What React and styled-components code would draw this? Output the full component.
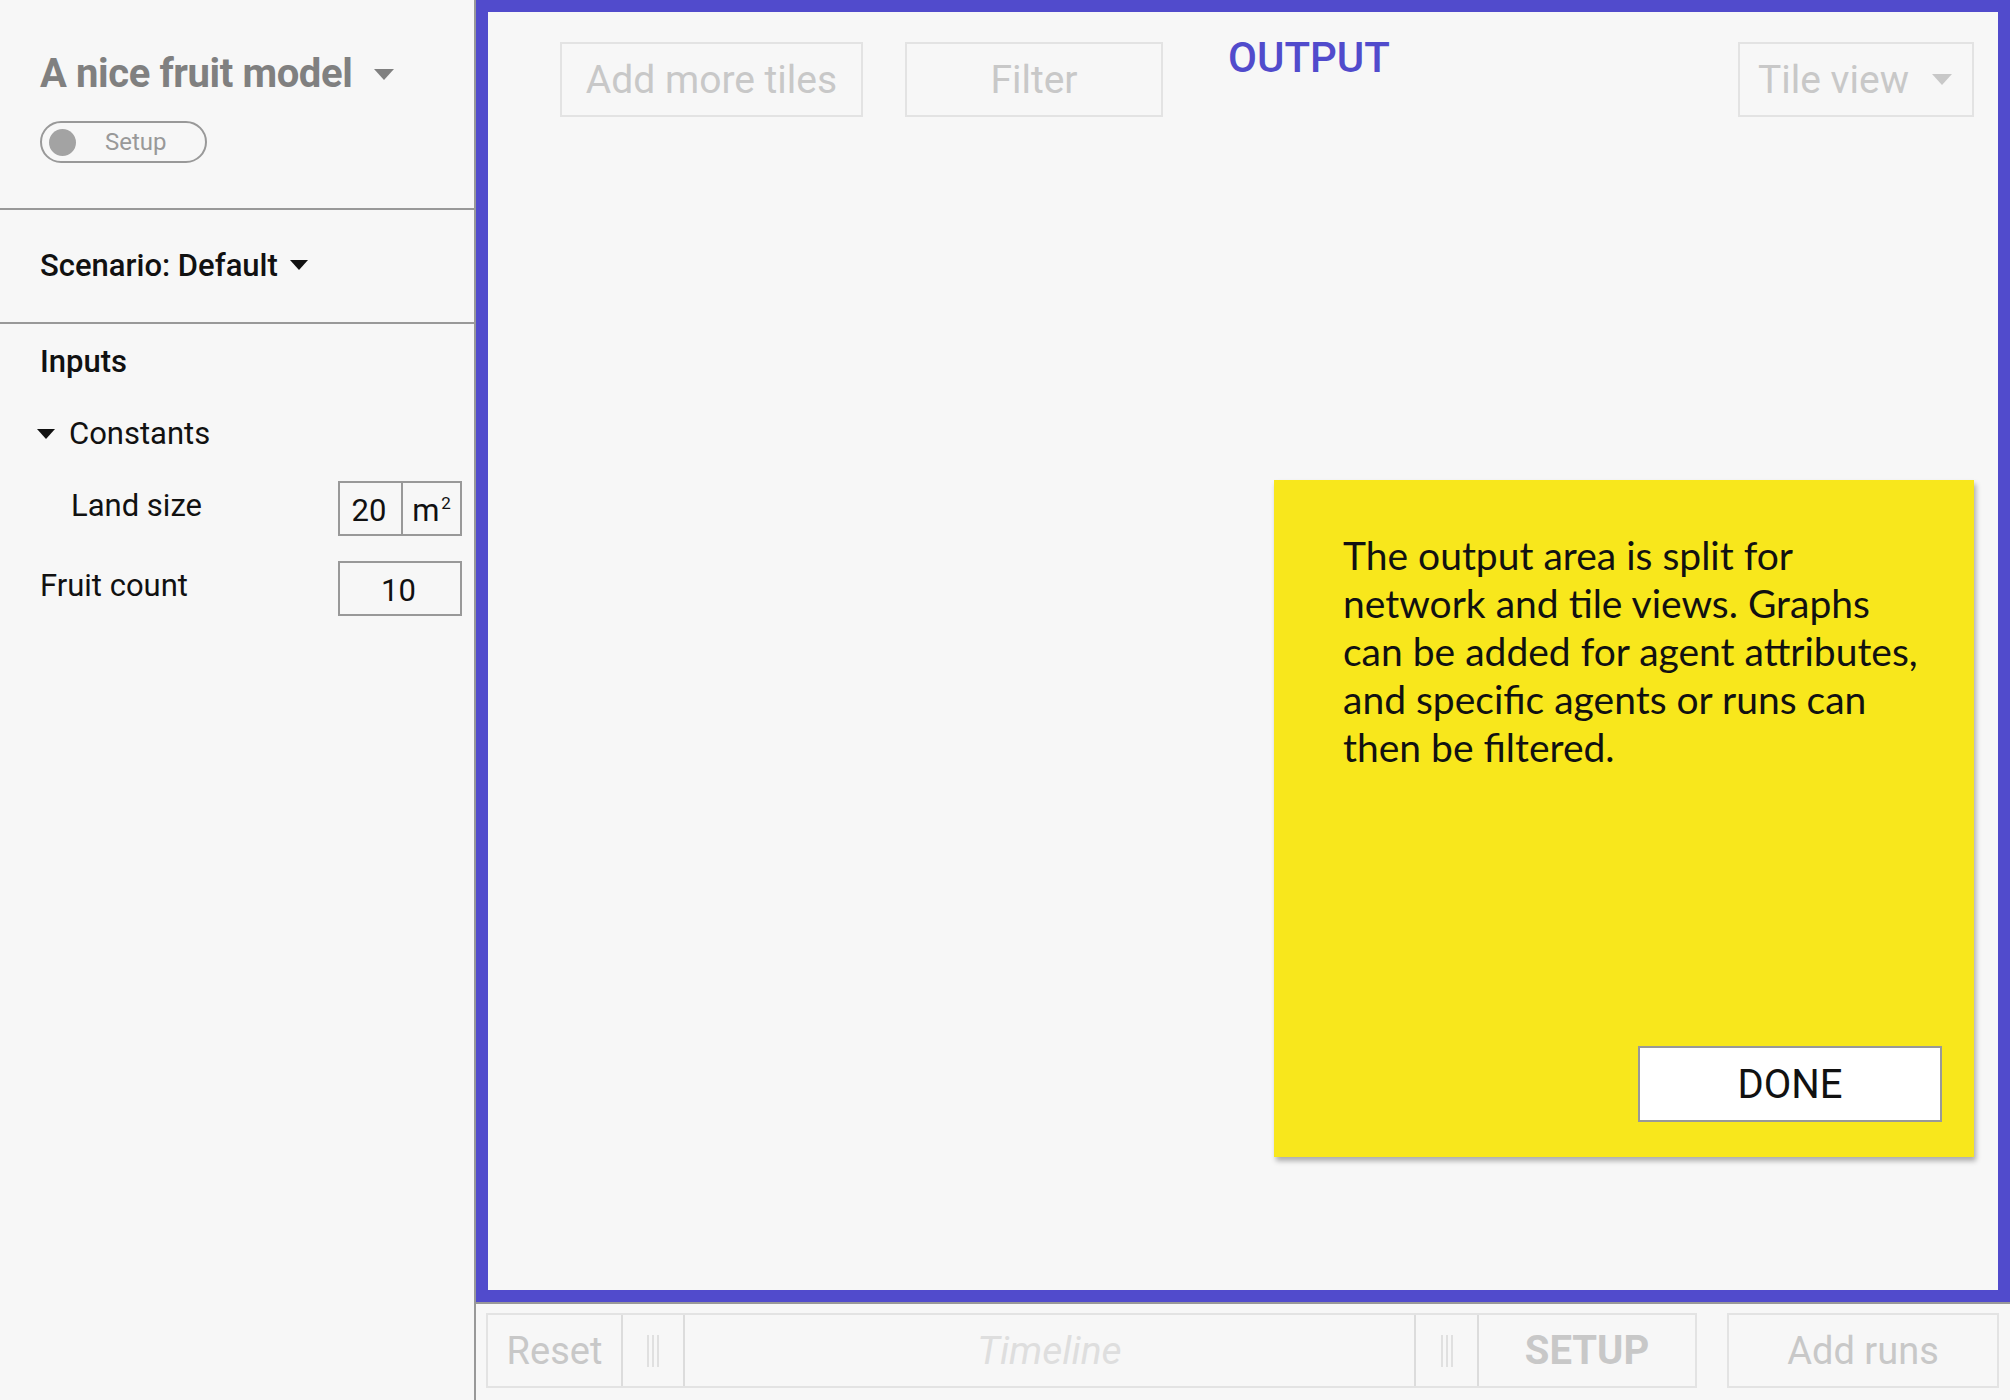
import React from "react";
import styled, { createGlobalStyle } from "styled-components";

const GlobalStyle = createGlobalStyle`
  html, body {
    margin: 0;
    padding: 0;
    background: #f7f7f7;
  }
  body {
    font-family: Roboto, "Liberation Sans", sans-serif;
    color: #111;
  }
  * {
    box-sizing: border-box;
  }
`;

const PURPLE = "#514bcc";

const App = () => {
  return (
    <Page>
      <GlobalStyle />
      <Sidebar>
        <ModelHeader>
          <ModelTitle>
            A nice fruit model
            <Caret size={10} color="#808080" />
          </ModelTitle>
          <Toggle>
            <Knob />
            <ToggleLabel>Setup</ToggleLabel>
          </Toggle>
        </ModelHeader>

        <ScenarioRow>
          Scenario: Default
          <Caret size={9} color="#111" />
        </ScenarioRow>

        <InputsSection>
          <SectionTitle>Inputs</SectionTitle>
          <GroupToggle>
            <Caret size={9} color="#111" />
            Constants
          </GroupToggle>
          <ParamList>
            <ParamRow $indent>
              Land size
              <ValueBox>
                <ValueCell $w={61}>20</ValueCell>
                <ValueCell $w={59} $divider>
                  m<Sup>2</Sup>
                </ValueCell>
              </ValueBox>
            </ParamRow>
            <ParamRow>
              Fruit count
              <ValueBox>
                <ValueCell $w={120}>10</ValueCell>
              </ValueBox>
            </ParamRow>
          </ParamList>
        </InputsSection>
      </Sidebar>

      <Main>
        <OutputFrame>
          <Toolbar>
            <GhostButton $w={303}>Add more tiles</GhostButton>
            <GhostButton $w={258}>Filter</GhostButton>
            <OutputTitle>OUTPUT</OutputTitle>
            <ViewSelect>
              Tile view
              <Caret size={10} color="#c8c8c8" />
            </ViewSelect>
          </Toolbar>

          <Coachmark>
            <CoachText>
              The output area is split for
              <br />
              network and tile views. Graphs
              <br />
              can be added for agent attributes,
              <br />
              and specific agents or runs can
              <br />
              then be filtered.
            </CoachText>
            <DoneButton>DONE</DoneButton>
          </Coachmark>
        </OutputFrame>

        <BottomBar>
          <Transport>
            <TransportCell $w={133} $first>
              Reset
            </TransportCell>
            <HandleCell $w={62}>
              <Grip />
            </HandleCell>
            <TimelineCell>Timeline</TimelineCell>
            <HandleCell $w={63}>
              <Grip />
            </HandleCell>
            <TransportCell $w={218} $bold>
              SETUP
            </TransportCell>
          </Transport>
          <GhostButton $w={272} $h={75} $size={38}>
            Add runs
          </GhostButton>
        </BottomBar>
      </Main>
    </Page>
  );
};

export default App;

const Page = styled.div`
  display: flex;
  width: 2010px;
  height: 1400px;
  overflow: hidden;
  background: #f7f7f7;
`;

/* ---------- sidebar ---------- */

const Sidebar = styled.aside`
  flex: 0 0 476px;
  border-right: 2px solid #999;
  display: flex;
  flex-direction: column;
`;

const ModelHeader = styled.div`
  height: 210px;
  padding: 54px 0 0 40px;
  border-bottom: 2px solid #999;
`;

const ModelTitle = styled.div`
  display: flex;
  align-items: center;
  gap: 22px;
  font-size: 40px;
  line-height: 40px;
  font-weight: 700;
  color: #808080;
  letter-spacing: -0.4px;
`;

const Caret = styled.span`
  display: inline-block;
  width: 0;
  height: 0;
  border-left: ${(p) => p.size}px solid transparent;
  border-right: ${(p) => p.size}px solid transparent;
  border-top: ${(p) => Math.round(p.size * 1.1)}px solid ${(p) => p.color};
`;

const Toggle = styled.div`
  margin-top: 27px;
  width: 167px;
  height: 42px;
  border: 2px solid #999;
  border-radius: 21px;
  display: flex;
  align-items: center;
  padding-left: 7px;
`;

const Knob = styled.span`
  width: 27px;
  height: 27px;
  border-radius: 50%;
  background: #a3a3a3;
`;

const ToggleLabel = styled.span`
  margin-left: 29px;
  font-size: 24px;
  color: #999;
`;

const ScenarioRow = styled.div`
  height: 114px;
  padding: 0 0 2px 40px;
  border-bottom: 2px solid #999;
  display: flex;
  align-items: center;
  gap: 12px;
  font-size: 31px;
  font-weight: 500;
`;

const InputsSection = styled.div`
  padding: 22px 12px 0 0;
`;

const SectionTitle = styled.div`
  padding-left: 40px;
  font-size: 31px;
  line-height: 31px;
  font-weight: 500;
`;

const GroupToggle = styled.div`
  margin-top: 41px;
  padding-left: 37px;
  display: flex;
  align-items: center;
  gap: 14px;
  font-size: 31px;
  line-height: 31px;
`;

const ParamList = styled.div`
  margin-top: 32px;
  display: flex;
  flex-direction: column;
  gap: 25px;
`;

const ParamRow = styled.div`
  height: 55px;
  display: flex;
  align-items: center;
  justify-content: space-between;
  padding-left: ${(p) => (p.$indent ? 71 : 40)}px;
  padding-bottom: 6px;
  font-size: 31px;
`;

const ValueBox = styled.div`
  display: flex;
  height: 55px;
  margin-bottom: -6px;
  border: 2px solid #999;
`;

const ValueCell = styled.div`
  width: ${(p) => p.$w}px;
  display: flex;
  align-items: center;
  justify-content: center;
  padding-top: 4px;
  padding-right: ${(p) => (p.$divider ? 0 : 3)}px;
  font-size: 31px;
  border-left: ${(p) => (p.$divider ? "2px solid #999" : "none")};
`;

const Sup = styled.sup`
  font-size: 17px;
  align-self: flex-start;
  margin-top: 6px;
  margin-left: 2px;
`;

/* ---------- output ---------- */

const Main = styled.main`
  flex: 1;
  display: flex;
  flex-direction: column;
`;

const OutputFrame = styled.section`
  position: relative;
  height: 1302px;
  border: 12px solid ${PURPLE};
`;

const Toolbar = styled.div`
  display: flex;
  align-items: flex-start;
  gap: 42px;
  padding: 30px 24px 0 72px;
`;

const GhostButton = styled.div`
  width: ${(p) => p.$w}px;
  height: ${(p) => p.$h || 75}px;
  flex: 0 0 auto;
  display: flex;
  align-items: center;
  justify-content: center;
  border: 2px solid #e3e3e3;
  font-size: ${(p) => p.$size || 39}px;
  color: #c8c8c8;
`;

const OutputTitle = styled.div`
  margin-left: 23px;
  margin-top: -5px;
  font-size: 42px;
  line-height: 42px;
  font-weight: 500;
  color: ${PURPLE};
`;

const ViewSelect = styled.div`
  margin-left: auto;
  width: 236px;
  height: 75px;
  display: flex;
  align-items: center;
  justify-content: space-between;
  padding: 0 20px 0 18px;
  border: 2px solid #e3e3e3;
  font-size: 39px;
  color: #c8c8c8;
`;

const Coachmark = styled.div`
  position: absolute;
  top: 468px;
  right: 24px;
  width: 700px;
  height: 677px;
  display: flex;
  flex-direction: column;
  padding: 51px 32px 35px 69px;
  background: #f8e71c;
  box-shadow: 2px 4px 5px rgba(0, 0, 0, 0.3);
`;

const CoachText = styled.p`
  margin: 0;
  font-family: Lato, "Open Sans", sans-serif;
  font-size: 39px;
  line-height: 48px;
  color: #111;
`;

const DoneButton = styled.div`
  margin-top: auto;
  align-self: flex-end;
  width: 304px;
  height: 76px;
  display: flex;
  align-items: center;
  justify-content: center;
  background: #fff;
  border: 2px solid #999;
  font-size: 40px;
  color: #111;
`;

/* ---------- bottom bar ---------- */

const BottomBar = styled.footer`
  flex: 1;
  display: flex;
  align-items: flex-start;
  gap: 30px;
  padding: 9px 11px 0 10px;
  border-top: 2px solid #999;
`;

const Transport = styled.div`
  flex: 1;
  height: 75px;
  display: flex;
  border: 2px solid #e3e3e3;
`;

const TransportCell = styled.div`
  flex: 0 0 ${(p) => p.$w}px;
  display: flex;
  align-items: center;
  justify-content: center;
  font-size: ${(p) => (p.$bold ? 40 : 38)}px;
  font-weight: ${(p) => (p.$bold ? 700 : 400)};
  color: #c8c8c8;
  border-left: ${(p) => (p.$first ? "none" : "2px solid #dcdcdc")};
`;

const HandleCell = styled.div`
  flex: 0 0 ${(p) => p.$w}px;
  display: flex;
  align-items: center;
  justify-content: center;
  border-left: 2px solid #dcdcdc;
`;

const Grip = styled.span`
  width: 12px;
  height: 32px;
  border-left: 2px solid #e0e0e0;
  border-right: 2px solid #e0e0e0;
  background: linear-gradient(#e0e0e0, #e0e0e0) center / 2px 100% no-repeat;
`;

const TimelineCell = styled.div`
  flex: 1;
  display: flex;
  align-items: center;
  justify-content: center;
  border-left: 2px solid #dcdcdc;
  font-size: 39px;
  font-style: italic;
  color: #dedede;
`;
